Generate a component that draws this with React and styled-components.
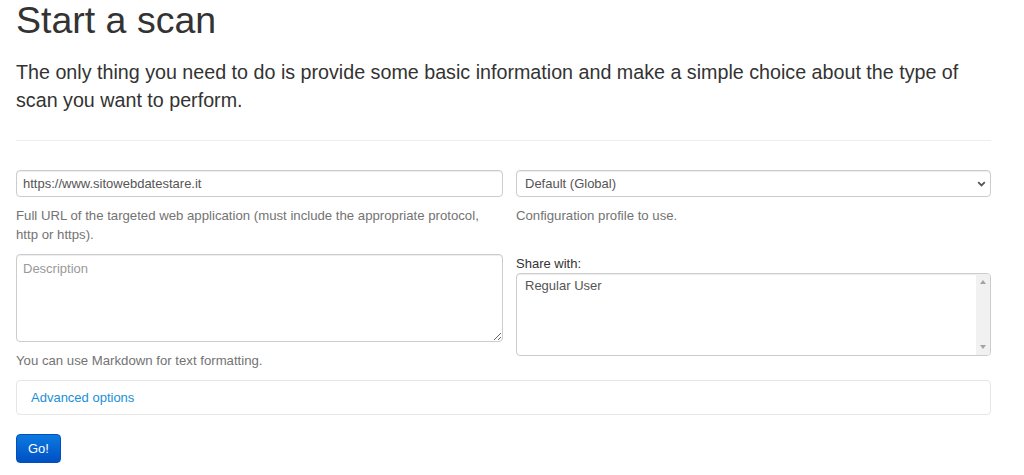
import styled, { createGlobalStyle } from "styled-components";

const Global = createGlobalStyle`
  html, body {
    margin: 0;
    padding: 0;
    background: #fff;
  }
  body {
    font-family: "Liberation Sans", Arial, sans-serif;
    font-size: 13px;
    line-height: 19px;
    color: #333;
  }
`;

const Page = styled.div`
  width: 975px;
  padding: 1px 0 0 16px;
`;

const Title = styled.h1`
  margin: 0 0 17px;
  font-size: 37.5px;
  line-height: 39.6px;
  font-weight: normal;
  color: #333;
`;

const Lead = styled.p`
  margin: 0;
  font-size: 19.7px;
  line-height: 28px;
  font-weight: normal;
  color: #333;
`;

const Rule = styled.hr`
  margin: 26px 0 29px;
  border: 0;
  border-top: 1px solid #eee;
`;

const Form = styled.form`
  display: grid;
  grid-template-columns: 487px 475px;
  column-gap: 13px;
  align-items: start;
`;

const Group = styled.div`
  display: flex;
  flex-direction: column;
  margin-bottom: ${(p) => p.$gap || 0}px;
`;

const fieldBase = `
  box-sizing: border-box;
  width: 100%;
  border: 1px solid #ccc;
  border-radius: 4px;
  background: #fff;
  box-shadow: inset 0 1px 1px rgba(0, 0, 0, 0.075);
  font-family: "Liberation Sans", Arial, sans-serif;
  font-size: 13px;
  color: #555;
`;

const TextInput = styled.input`
  ${fieldBase}
  height: 27px;
  padding: 4px 6px;
  outline: none;
`;

const TextArea = styled.textarea`
  ${fieldBase}
  display: block;
  height: 88px;
  padding: 4px 6px;
  line-height: 19px;
  resize: vertical;
  outline: none;
  &::placeholder {
    color: #999;
  }
`;

const SelectWrap = styled.div`
  position: relative;
`;

const Select = styled.select`
  ${fieldBase}
  height: 27px;
  padding: 3px 8px;
  appearance: none;
  outline: none;
`;

const Chevron = styled.svg`
  position: absolute;
  right: 5px;
  top: 11px;
  pointer-events: none;
`;

const Help = styled.span`
  display: block;
  margin-top: 9px;
  color: #737373;
  font-size: 13.2px;
  line-height: 19px;
`;

const Label = styled.label`
  display: block;
  color: #333;
  line-height: 19px;
`;

const ListBox = styled.div`
  ${fieldBase}
  height: 83px;
  display: flex;
  overflow: hidden;
`;

const Options = styled.div`
  flex: 1;
  padding: 2px 8px;
  line-height: 19px;
`;

const Track = styled.div`
  width: 14px;
  background: #f1f1f1;
  display: flex;
  flex-direction: column;
  justify-content: space-between;
  align-items: center;
  padding: 6px 0;
`;

const Arrow = styled.div`
  width: 0;
  height: 0;
  border-left: 3.5px solid transparent;
  border-right: 3.5px solid transparent;
  ${(p) =>
    p.$down
      ? "border-top: 4px solid #a3a3a3;"
      : "border-bottom: 4px solid #a3a3a3;"}
`;

const Panel = styled.div`
  grid-column: 1 / -1;
  margin-top: 10px;
  border: 1px solid #e6e6e6;
  border-radius: 4px;
  padding: 8px 14px 7px;
  line-height: 18px;
`;

const PanelLink = styled.a`
  color: #1a8fd8;
  text-decoration: none;
  cursor: pointer;
`;

const Actions = styled.div`
  grid-column: 1 / -1;
  margin-top: 19px;
`;

const GoButton = styled.button`
  height: 29px;
  padding: 0 11px;
  border: 1px solid #0550b8;
  border-radius: 4px;
  background: linear-gradient(#0c7ae0, #0050c4);
  color: #fff;
  font-family: "Liberation Sans", Arial, sans-serif;
  font-size: 13px;
  cursor: pointer;
`;

const App = () => {
  return (
    <>
      <Global />
      <Page>
        <Title>Start a scan</Title>
        <Lead>
          The only thing you need to do is provide some basic information and
          make a simple choice about the type of scan you want to perform.
        </Lead>
        <Rule />
        <Form onSubmit={(e) => e.preventDefault()}>
          <Group $gap={10}>
            <TextInput defaultValue="https://www.sitowebdatestare.it" />
            <Help>
              Full URL of the targeted web application (must include the
              appropriate protocol, http or https).
            </Help>
          </Group>
          <Group>
            <SelectWrap>
              <Select defaultValue="global">
                <option value="global">Default (Global)</option>
              </Select>
              <Chevron width="9" height="6" viewBox="0 0 9 6">
                <polyline
                  points="1.2,1.2 4.5,4.5 7.8,1.2"
                  fill="none"
                  stroke="#555"
                  strokeWidth="1.8"
                />
              </Chevron>
            </SelectWrap>
            <Help>Configuration profile to use.</Help>
          </Group>
          <Group>
            <TextArea placeholder="Description" />
            <Help>You can use Markdown for text formatting.</Help>
          </Group>
          <Group>
            <Label>Share with:</Label>
            <ListBox>
              <Options>Regular User</Options>
              <Track>
                <Arrow />
                <Arrow $down />
              </Track>
            </ListBox>
          </Group>
          <Panel>
            <PanelLink>Advanced options</PanelLink>
          </Panel>
          <Actions>
            <GoButton type="submit">Go!</GoButton>
          </Actions>
        </Form>
      </Page>
    </>
  );
};

export default App;
